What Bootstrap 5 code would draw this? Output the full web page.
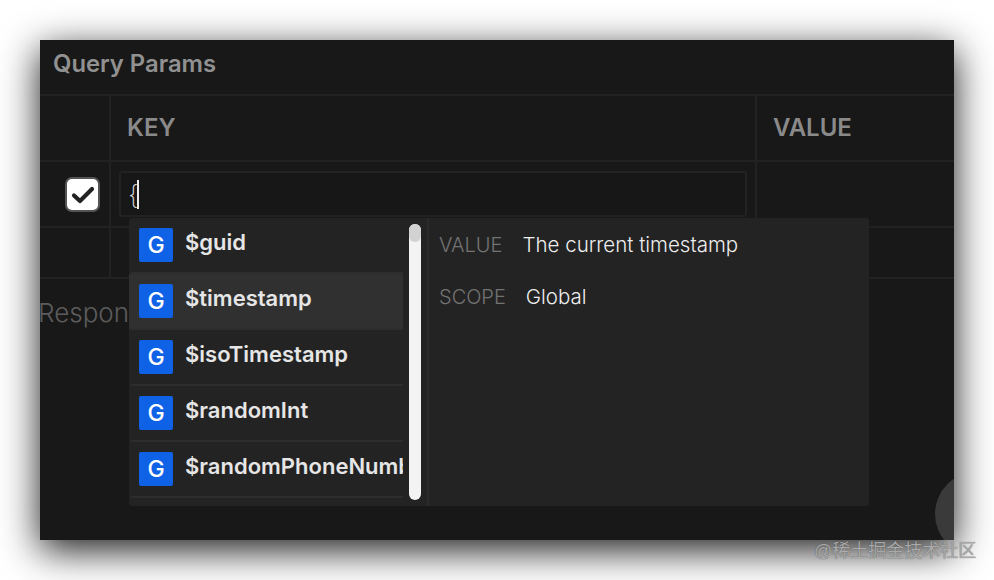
<!DOCTYPE html>
<html lang="en">
<head>
  <meta charset="UTF-8" />
  <title>Query Params</title>
  <link href="https://cdn.jsdelivr.net/npm/bootstrap@5.3.0/dist/css/bootstrap.min.css" rel="stylesheet" />
  <style>
    body {
      background: #fff;
      font-family: Inter, "Liberation Sans", sans-serif;
      height: 580px;
      overflow: hidden;
      padding: 40px;
    }
    .app-window {
      background: #181818;
      box-shadow: 0 10px 36px rgba(0,0,0,.9);
      height: 500px;
      overflow: hidden;
      position: relative;
      width: 914px;
    }
    .title-bar {
      border-bottom: 2px solid #222;
      color: #919191;
      font-size: 23.8px;
      font-weight: 600;
      height: 56px;
      line-height: 48px;
      padding-left: 13px;
    }
    .grid-line { border-bottom: 2px solid #222; }
    .head-line { height: 66px; }
    .input-line { height: 66px; }
    .empty-line { height: 51px; }
    .cell-check { border-right: 2px solid #222; width: 71px; }
    .cell-key { border-right: 2px solid #222; padding: 0 8px 0 8px; width: 646px; }
    .head-text {
      color: #8a8a8a;
      font-size: 24px;
      font-weight: 600;
      line-height: 64px;
      padding-left: 16px;
    }
    .head-key { margin-left: -8px; }
    .tick-wrap { padding: 15px 0 0 25px; }
    .tick-box {
      align-items: center;
      background: #fff;
      border: 2px solid #555;
      border-radius: 7px;
      display: flex;
      height: 35px;
      justify-content: center;
      width: 35px;
    }
    .key-input.form-control {
      align-items: center;
      background: #171717;
      border: 2px solid #222;
      border-radius: 3px;
      color: #ddd;
      display: flex;
      font-size: 26px;
      font-weight: 200;
      height: 46px;
      margin-top: 9px;
      padding: 0 0 0 7px;
    }
    .caret-bar { background: #eee; height: 29px; margin-left: -2px; width: 2px; }
    .resp-text {
      color: #5c5c5c;
      font-size: 26px;
      font-weight: 300;
      line-height: 30px;
      margin: 19px 0 0 -2px;
    }
    .suggest-box {
      background: #232323;
      border-radius: 3px;
      height: 288px;
      left: 89px;
      overflow: hidden;
      position: absolute;
      top: 178px;
      width: 740px;
    }
    .suggest-list { flex: none; width: 274px; }
    .suggest-item {
      align-items: center;
      border-bottom: 2px solid #2d2d2d;
      display: flex;
      height: 56px;
      margin-left: 2px;
      overflow: hidden;
      padding-left: 8px;
      white-space: nowrap;
    }
    .suggest-item.is-active { background: #303030; margin-left: 0; padding-left: 10px; }
    .g-badge {
      background: #0f62e6;
      border-radius: 2px;
      color: #fff;
      flex: none;
      font-size: 23px;
      font-weight: 500;
      height: 34px;
      line-height: 35px;
      text-align: center;
      width: 34px;
    }
    .var-name {
      color: #e6e6e6;
      font-size: 22px;
      font-weight: 600;
      margin: -6px 0 0 12px;
    }
    .scroll-track {
      background: #f3f3f3;
      border-radius: 6px;
      flex: none;
      height: 276px;
      margin: 6px 0 0 6px;
      width: 12px;
    }
    .scroll-thumb { background: #d2d2d2; border-radius: 6px; height: 18px; }
    .detail-pane { border-left: 2px solid #2a2a2a; margin-left: 6px; padding: 11px 0 0 10px; }
    .detail-row { color: #eee; font-size: 20.5px; font-weight: 300; height: 52px; line-height: 32px; }
    .detail-label { color: #737373; font-size: 20px; margin-right: 20px; }
    .fab-ball {
      background: #3a3a3a;
      border-radius: 50%;
      height: 84px;
      left: 895px;
      position: absolute;
      top: 432px;
      width: 84px;
    }
    .stamp-text {
      color: #aaa;
      font-family: "Liberation Sans", "Noto Sans CJK SC", sans-serif;
      font-size: 18px;
      left: 814px;
      line-height: 22px;
      position: absolute;
      text-shadow: 0 0 1px rgba(0,0,0,.5);
      top: 540px;
    }
  </style>
</head>
<body>
  <div class="app-window">
    <div class="title-bar">Query Params</div>
    <div class="d-flex grid-line head-line">
      <div class="cell-check"></div>
      <div class="cell-key"><div class="head-text head-key">KEY</div></div>
      <div class="head-text">VALUE</div>
    </div>
    <div class="d-flex grid-line input-line">
      <div class="cell-check tick-wrap">
        <div class="tick-box">
          <svg width="24" height="20" viewBox="0 0 24 20"><path d="M3 10.5 L9 16 L21 4" fill="none" stroke="#222" stroke-width="4.2" stroke-linecap="round" stroke-linejoin="round"/></svg>
        </div>
      </div>
      <div class="cell-key"><div class="form-control key-input"><span>{</span><span class="caret-bar"></span></div></div>
    </div>
    <div class="d-flex grid-line empty-line">
      <div class="cell-check"></div>
      <div class="cell-key"></div>
    </div>
    <div class="resp-text">Response</div>

    <div class="suggest-box d-flex">
      <div class="suggest-list">
        <div class="suggest-item"><span class="g-badge">G</span><span class="var-name">$guid</span></div>
        <div class="suggest-item is-active"><span class="g-badge">G</span><span class="var-name">$timestamp</span></div>
        <div class="suggest-item"><span class="g-badge">G</span><span class="var-name">$isoTimestamp</span></div>
        <div class="suggest-item"><span class="g-badge">G</span><span class="var-name">$randomInt</span></div>
        <div class="suggest-item"><span class="g-badge">G</span><span class="var-name">$randomPhoneNumber</span></div>
      </div>
      <div class="scroll-track"><div class="scroll-thumb"></div></div>
      <div class="detail-pane flex-grow-1">
        <div class="detail-row"><span class="detail-label">VALUE</span>The current timestamp</div>
        <div class="detail-row"><span class="detail-label">SCOPE</span>Global</div>
      </div>
    </div>
    <div class="fab-ball"></div>
  </div>
  <div class="stamp-text">@稀土掘金技术社区</div>
  <script src="https://cdn.jsdelivr.net/npm/bootstrap@5.3.0/dist/js/bootstrap.bundle.min.js"></script>
</body>
</html>
